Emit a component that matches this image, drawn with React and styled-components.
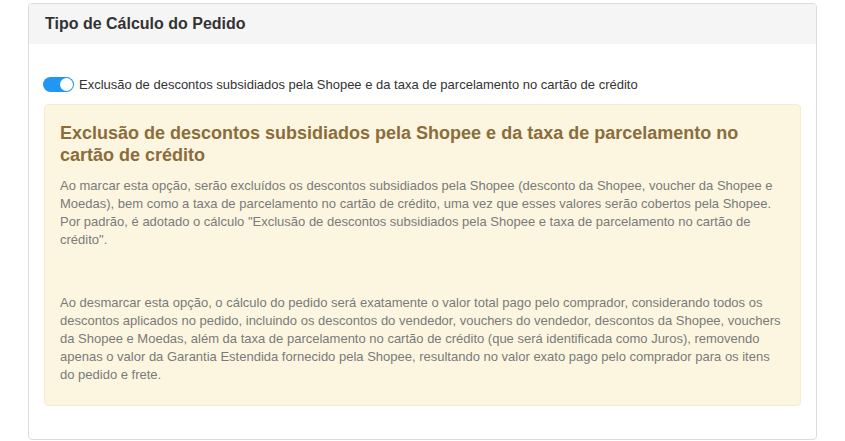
import React, { useState } from "react";
import styled, { createGlobalStyle } from "styled-components";

const GlobalStyle = createGlobalStyle`
  body {
    margin: 0;
    background: #fff;
    font-family: "Liberation Sans", Arial, sans-serif;
  }
`;

const firstText = [
  "Ao marcar esta opção, serão excluídos os descontos subsidiados pela Shopee (desconto da Shopee, voucher da Shopee e",
  "Moedas), bem como a taxa de parcelamento no cartão de crédito, uma vez que esses valores serão cobertos pela Shopee.",
  'Por padrão, é adotado o cálculo "Exclusão de descontos subsidiados pela Shopee e taxa de parcelamento no cartão de',
  'crédito".',
];

const secondText = [
  "Ao desmarcar esta opção, o cálculo do pedido será exatamente o valor total pago pelo comprador, considerando todos os",
  "descontos aplicados no pedido, incluindo os descontos do vendedor, vouchers do vendedor, descontos da Shopee, vouchers",
  "da Shopee e Moedas, além da taxa de parcelamento no cartão de crédito (que será identificada como Juros), removendo",
  "apenas o valor da Garantia Estendida fornecido pela Shopee, resultando no valor exato pago pelo comprador para os itens",
  "do pedido e frete.",
];

function App() {
  const [checked, setChecked] = useState(true);
  return (
    <Page>
      <GlobalStyle />
      <Card>
        <CardHeader>Tipo de Cálculo do Pedido</CardHeader>
        <CardBody>
          <ToggleRow>
            <Switch on={checked} onClick={() => setChecked(!checked)}>
              <Knob on={checked} />
            </Switch>
            <span>
              Exclusão de descontos subsidiados pela Shopee e da taxa de
              parcelamento no cartão de crédito
            </span>
          </ToggleRow>
          <Alert>
            <AlertTitle>
              Exclusão de descontos subsidiados pela Shopee e da taxa de
              parcelamento no cartão de crédito
            </AlertTitle>
            <Paragraph>
              {firstText.map((line) => (
                <Line key={line}>{line}</Line>
              ))}
            </Paragraph>
            <Paragraph spaced>
              {secondText.map((line) => (
                <Line key={line}>{line}</Line>
              ))}
            </Paragraph>
          </Alert>
        </CardBody>
      </Card>
    </Page>
  );
}

export default App;

const Page = styled.div`
  padding: 3px 28px 0 28px;
  width: 845px;
  box-sizing: border-box;
`;

const Card = styled.div`
  width: 789px;
  height: 437px;
  box-sizing: border-box;
  border: 1px solid #dcdcdc;
  border-radius: 4px;
  overflow: hidden;
  display: flex;
  flex-direction: column;
`;

const CardHeader = styled.div`
  background: #f5f5f5;
  height: 40px;
  display: flex;
  align-items: center;
  padding: 0 16px;
  font-size: 16px;
  font-weight: bold;
  color: #333;
`;

const CardBody = styled.div`
  padding: 32px 15px 0 14px;
`;

const ToggleRow = styled.div`
  display: flex;
  align-items: center;
  gap: 5px;
  font-size: 13px;
  color: #333;
  height: 17px;
`;

const Switch = styled.div`
  width: 31px;
  height: 15px;
  border-radius: 8px;
  background: ${(p) => (p.on ? "#2196f3" : "#ccc")};
  position: relative;
  cursor: pointer;
  flex-shrink: 0;
`;

const Knob = styled.div`
  position: absolute;
  top: 1px;
  left: ${(p) => (p.on ? "17px" : "1px")};
  width: 13px;
  height: 13px;
  border-radius: 50%;
  background: #fff;
  transition: left 0.2s;
`;

const Alert = styled.div`
  margin: 11px 0 0 1px;
  height: 302px;
  box-sizing: border-box;
  background: #fcf6e1;
  border: 1px solid #faebcc;
  border-radius: 4px;
  padding: 15px 5px 15px 15px;
`;

const AlertTitle = styled.h4`
  margin: 2px 0 11px 0;
  max-width: 725px;
  font-size: 18px;
  line-height: 22px;
  font-weight: bold;
  color: #8a6d3b;
`;

const Paragraph = styled.p`
  margin: ${(p) => (p.spaced ? "45px" : "0")} 0 0 0;
  font-size: 13px;
  line-height: 18px;
  color: #7a7a7a;
`;

const Line = styled.span`
  display: block;
  white-space: nowrap;
`;
